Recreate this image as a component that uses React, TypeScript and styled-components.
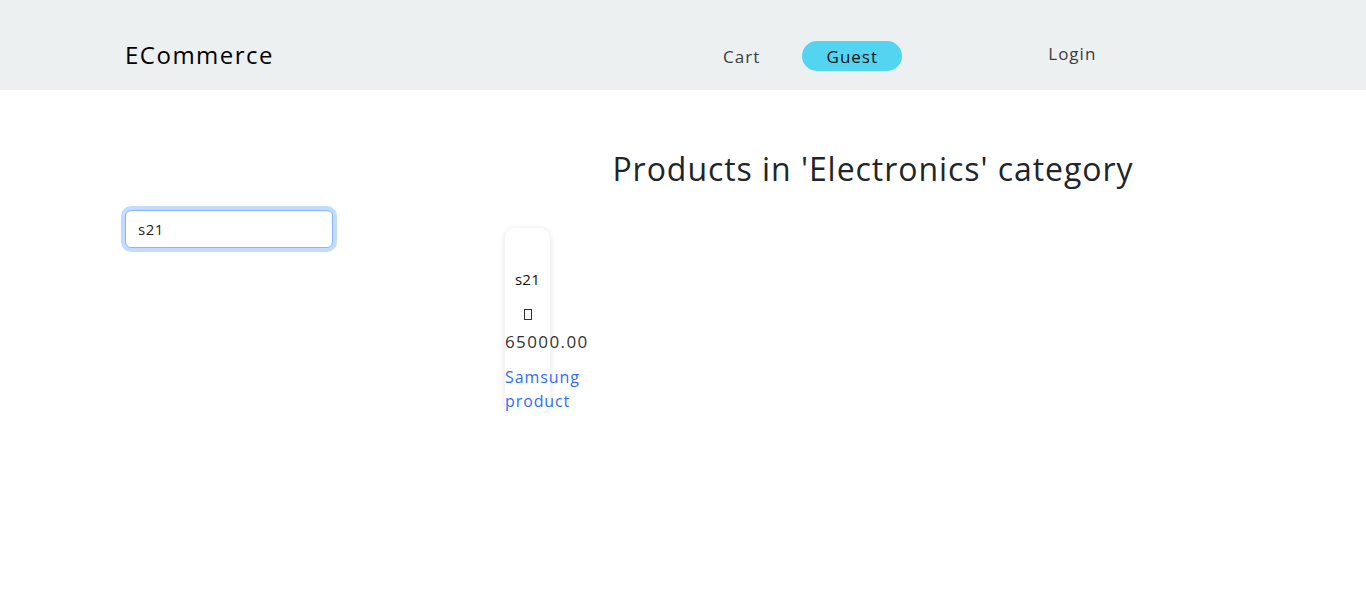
import React, { useEffect, useRef } from "react";
import styled, { createGlobalStyle } from "styled-components";

const Global = createGlobalStyle`
  * { box-sizing: border-box; }
  body {
    margin: 0;
    font-family: "Open Sans", "DejaVu Sans", sans-serif;
    color: #212529;
    background: #fff;
    font-size: 16px;
  }
`;

const NavBar = styled.header`
  height: 90px;
  background: #ecf0f1;
`;

const NavInner = styled.div`
  width: 1140px;
  margin: 0 auto;
  padding: 41px 12px 0 12px;
  height: 100%;
  display: flex;
  align-items: flex-start;
`;

const Brand = styled.a`
  font-size: 24px;
  letter-spacing: 1.5px;
  line-height: 28px;
  color: #000;
  text-decoration: none;
`;

const NavLinks = styled.nav`
  display: flex;
  align-items: flex-start;
  margin-left: 449px;
`;

const NavLink = styled.a<{ $ml?: number; $mt?: number }>`
  font-size: 17px;
  letter-spacing: 1px;
  line-height: 30px;
  color: #3b3d3e;
  text-decoration: none;
  margin-left: ${(p) => p.$ml ?? 0}px;
  margin-top: ${(p) => p.$mt ?? 0}px;
`;

const Pill = styled.span`
  margin-left: 42px;
  width: 100px;
  height: 30px;
  border-radius: 15px;
  background: #53d5f2;
  color: #111;
  font-size: 17px;
  letter-spacing: 1px;
  display: flex;
  align-items: center;
  justify-content: center;
`;

const Main = styled.main`
  width: 1140px;
  margin: 0 auto;
  display: grid;
  grid-template-columns: 380px 760px;
`;

const LeftCol = styled.div`
  padding: 120px 12px 0 12px;
`;

const SearchInput = styled.input`
  width: 208px;
  height: 38px;
  border: 1px solid #86b7fe;
  border-radius: 6px;
  box-shadow: 0 0 0 4px rgba(13, 110, 253, 0.25);
  padding: 0 12px;
  font-family: inherit;
  font-size: 15px;
  letter-spacing: 0.5px;
  color: #212529;
  caret-color: #000;
  outline: none;
`;

const RightCol = styled.div`
  padding: 0 12px;
`;

const Heading = styled.h1`
  margin: 60px 0 40px;
  font-size: 32px;
  font-weight: 400;
  letter-spacing: 0.95px;
  line-height: 38px;
  text-align: center;
  color: #212529;
`;

const Card = styled.div`
  width: 45px;
  border-radius: 10px;
  box-shadow: 0 1px 6px rgba(0, 0, 0, 0.12);
  padding-top: 39px;
  text-align: center;
  white-space: nowrap;
`;

const Title = styled.div`
  font-size: 15px;
  letter-spacing: 0.3px;
  line-height: 24px;
  margin-bottom: 12px;
  color: #111;
`;

const GlyphLine = styled.div`
  height: 27px;
  display: flex;
  justify-content: center;
  align-items: center;
`;

const Tofu = styled.span`
  display: inline-block;
  width: 8px;
  height: 11px;
  border: 1px solid #333;
  margin-top: -4px;
`;

const Price = styled.div`
  font-size: 17px;
  letter-spacing: 1.4px;
  line-height: 24px;
  text-align: left;
  color: #333;
  margin-bottom: 11px;
`;

const Desc = styled.a`
  display: block;
  font-size: 16px;
  letter-spacing: 0.9px;
  line-height: 24px;
  color: #2f6cfb;
  text-align: left;
  text-decoration: none;
`;

export default function App() {
  const ref = useRef<HTMLInputElement>(null);
  useEffect(() => {
    const el = ref.current;
    if (el) {
      el.focus();
      el.setSelectionRange(3, 3);
    }
  }, []);
  return (
    <>
      <Global />
      <NavBar>
        <NavInner>
          <Brand href="#">ECommerce</Brand>
          <NavLinks>
            <NavLink href="#" $mt={1}>Cart</NavLink>
            <Pill>Guest</Pill>
            <NavLink href="#" $ml={146} $mt={-2}>Login</NavLink>
          </NavLinks>
        </NavInner>
      </NavBar>
      <Main>
        <LeftCol>
          <SearchInput ref={ref} defaultValue="s21" />
        </LeftCol>
        <RightCol>
          <Heading>Products in 'Electronics' category</Heading>
          <Card>
            <Title>s21</Title>
            <GlyphLine>
              <Tofu />
            </GlyphLine>
            <Price>65000.00</Price>
            <Desc href="#">Samsung<br />product</Desc>
          </Card>
        </RightCol>
      </Main>
    </>
  );
}
